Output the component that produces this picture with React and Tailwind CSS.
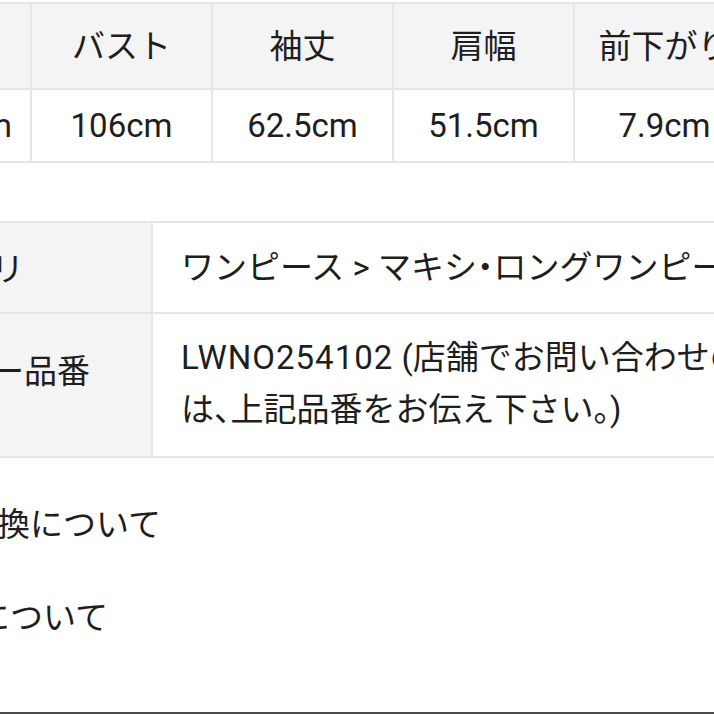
import React from "react";

const font = "font-['Roboto','Noto_Sans_CJK_JP',sans-serif]";

function Half({ children, center }) {
  return center ? (
    <span className="ml-[-0.25em] mr-[-0.25em]">{children}</span>
  ) : (
    <span className="mr-[-0.5em]">{children}</span>
  );
}

export default function App() {
  const headers = ["着丈", "バスト", "袖丈", "肩幅", "前下がり"];
  const values = ["125.5cm", "106cm", "62.5cm", "51.5cm", "7.9cm"];
  return (
    <div className={`w-[714px] h-[714px] overflow-hidden bg-white text-[#1e1e1e] flex flex-col ${font}`}>
      {/* size table */}
      <div className="mt-[2px] -ml-[151px] w-[907px] shrink-0 grid grid-cols-[179px_179px_179px_179px_179px] gap-[2px] bg-[#e6e6e6] p-[2px]">
        {headers.map((h, i) => (
          <div
            key={h}
            className={`h-[84px] bg-[#f4f4f4] flex items-center justify-center text-[33px] leading-none whitespace-nowrap ${i === 0 ? "text-transparent" : ""}`}
          >
            {h}
          </div>
        ))}
        {values.map((v, i) => (
          <div
            key={v}
            className={`h-[71px] bg-white flex items-center text-[33px] leading-none whitespace-nowrap ${i === 0 ? "justify-end pr-[18px]" : "justify-center"}`}
          >
            {v}
          </div>
        ))}
      </div>

      {/* detail table */}
      <div className="mt-[58px] -ml-[138px] w-[920px] shrink-0 grid grid-cols-[287px_1fr] gap-[2px] bg-[#e6e6e6] p-[2px] text-[33px] leading-[52px]">
        <div className="h-[89px] bg-[#f4f4f4] flex items-center pl-[28px] pt-[4px] whitespace-nowrap">カテゴリ</div>
        <div className="h-[89px] bg-white flex items-center pl-[28px] whitespace-nowrap">
          <span>
            ワンピース &gt; マキシ<Half center>・</Half>ロングワンピース
          </span>
        </div>
        <div className="h-[142px] bg-[#f4f4f4] pl-[28px] pt-[32px] whitespace-nowrap">メーカー品番</div>
        <div className="h-[142px] bg-white pl-[28px] pt-[18px] whitespace-nowrap">
          <span className="tracking-[1px]">LWNO254102</span> (店舗でお問い合わせの際
          <br />
          は<Half>、</Half>上記品番をお伝え下さい。)
        </div>
      </div>

      {/* links */}
      <div className="mt-[41px] -ml-[102px] text-[33px] leading-[52px] whitespace-nowrap">返品交換について</div>
      <div className="mt-[41px] -ml-[89px] text-[33px] leading-[52px] whitespace-nowrap">配送について</div>

      <div className="flex-1" />
      <div className="h-[2px] shrink-0 bg-[#4a4a4a]" />
    </div>
  );
}
